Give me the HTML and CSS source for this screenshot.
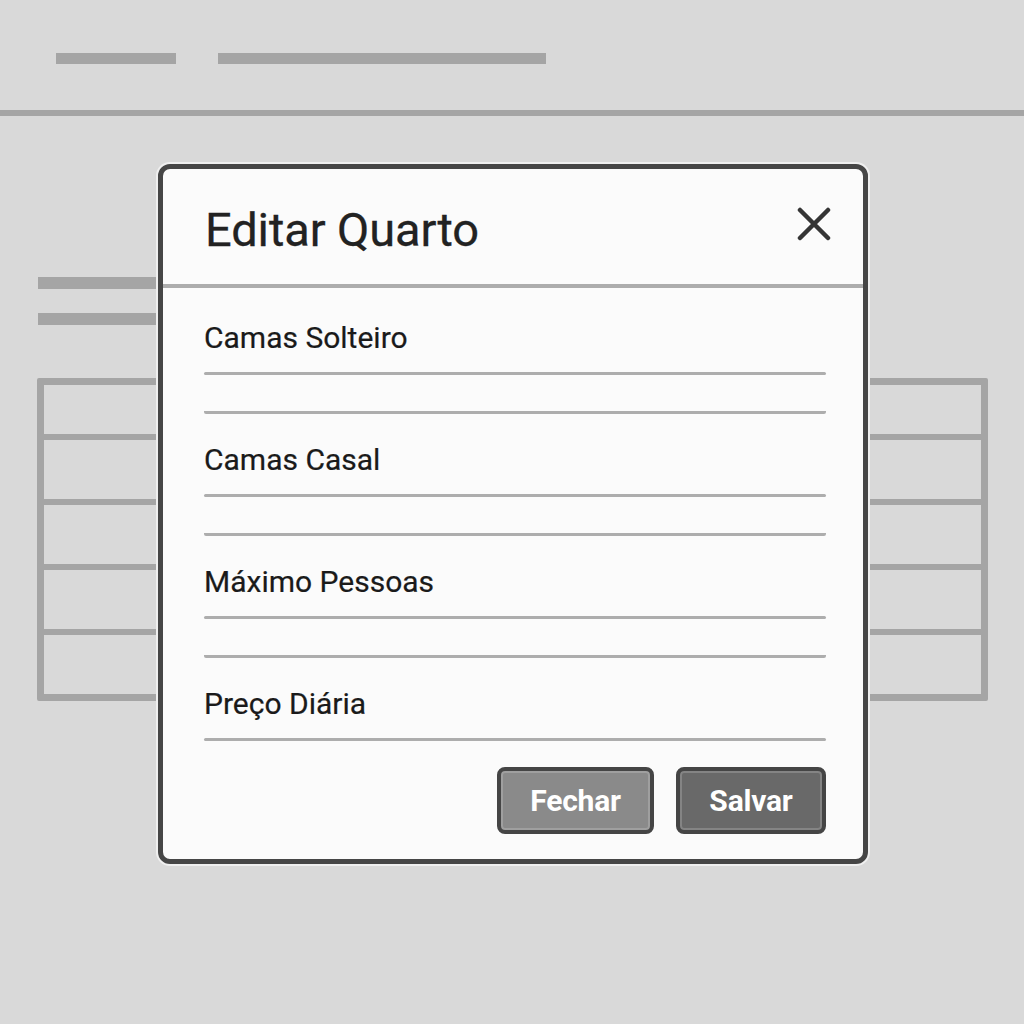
FILE: index.html
```html
<!DOCTYPE html>
<html lang="pt">
<head>
<meta charset="utf-8">
<title>Editar Quarto</title>
<link rel="stylesheet" href="styles.css">
</head>
<body>
<div class="page">
  <div class="topbar">
    <span class="bar bar-short"></span>
    <span class="bar bar-long"></span>
  </div>
  <div class="rule"></div>
  <div class="content">
    <div class="stub stub-first"></div>
    <div class="stub stub-second"></div>
    <div class="table">
      <div class="row row-first"></div>
      <div class="row"></div>
      <div class="row"></div>
      <div class="row"></div>
      <div class="row row-last"></div>
    </div>
  </div>

  <div class="modal">
    <div class="modal-header">
      <h1 class="modal-title">Editar Quarto</h1>
      <button class="close" aria-label="Fechar">
        <svg width="34" height="34" viewBox="0 0 34 34"><path d="M3 3 L31 31 M31 3 L3 31" stroke="#353535" stroke-width="4.5" stroke-linecap="round" fill="none"/></svg>
      </button>
    </div>
    <div class="modal-divider"></div>
    <div class="modal-body">
      <div class="field">
        <div class="label">Camas Solteiro</div>
        <div class="line"></div>
        <div class="input"></div>
      </div>
      <div class="field">
        <div class="label">Camas Casal</div>
        <div class="line"></div>
        <div class="input"></div>
      </div>
      <div class="field">
        <div class="label">Máximo Pessoas</div>
        <div class="line"></div>
        <div class="input"></div>
      </div>
      <div class="field field-last">
        <div class="label">Preço Diária</div>
        <div class="line"></div>
      </div>
      <div class="actions">
        <button class="btn btn-close">Fechar</button>
        <button class="btn btn-save">Salvar</button>
      </div>
    </div>
  </div>
</div>
</body>
</html>
```
FILE: styles.css
```css
* { box-sizing: border-box; }
html, body { margin: 0; padding: 0; }
body {
  background: #d9d9d9;
  font-family: Roboto, "Liberation Sans", sans-serif;
}
.page {
  position: relative;
  width: 1024px;
  height: 1024px;
  overflow: hidden;
}
.topbar {
  display: flex;
  gap: 42px;
  padding: 53px 0 0 56px;
}
.bar {
  display: block;
  height: 11px;
  background: #a5a5a5;
}
.bar-short { width: 120px; }
.bar-long { width: 328px; }
.rule {
  margin-top: 46px;
  height: 6px;
  background: #a5a5a5;
}
.content {
  padding: 0 36px 0 37px;
}
.stub {
  height: 12px;
  width: 170px;
  background: #a5a5a5;
  margin-left: 1px;
}
.stub-first { margin-top: 161px; }
.stub-second { margin-top: 24px; }
.table {
  margin-top: 53px;
  border: 7px solid #a5a5a5;
  border-radius: 2px;
}
.row {
  height: 65px;
  border-bottom: 6px solid #a5a5a5;
}
.row-first { height: 55px; }
.row-last { height: 59px; border-bottom: 0; }

.modal {
  position: absolute;
  left: 158px;
  top: 164px;
  width: 710px;
  background: #fbfbfb;
  border: 5px solid #464646;
  border-radius: 12px;
  box-shadow: 0 0 0 2px #efefef;
}
.modal-header {
  display: flex;
  justify-content: space-between;
  align-items: flex-start;
  height: 115px;
  padding: 33px 32px 0 42px;
}
.modal-title {
  margin: 0;
  font-size: 47px;
  line-height: 56px;
  font-weight: 400;
  color: #222222;
  letter-spacing: -0.1px;
  -webkit-text-stroke: 0.3px #222222;
}
.close {
  margin-top: 5px;
  padding: 0;
  border: 0;
  background: none;
  width: 34px;
  height: 34px;
}
.close svg { display: block; }
.modal-divider {
  height: 4px;
  background: #adadad;
}
.modal-body {
  padding: 32px 37px 25px 41px;
}
.field { margin-bottom: 28px; }
.field-last { margin-bottom: 26px; }
.label {
  font-size: 30px;
  line-height: 36px;
  color: #1a1a1a;
  margin-bottom: 16px;
  -webkit-text-stroke: 0.2px #1a1a1a;
}
.line {
  height: 3px;
  border-radius: 2px;
  background: #adadad;
}
.input {
  height: 39px;
  border-bottom: 3px solid #adadad;
  border-radius: 0 0 2px 2px;
}
.actions {
  display: flex;
  justify-content: flex-end;
  gap: 22px;
}
.btn {
  height: 67px;
  border: 4px solid #454545;
  border-radius: 8px;
  color: #ffffff;
  font-family: Roboto, "Liberation Sans", sans-serif;
  font-size: 30px;
  font-weight: 700;
  letter-spacing: -0.2px;
  box-shadow: inset 0 0 0 2px rgba(255,255,255,0.18);
}
.btn-close { width: 157px; background: #8a8a8a; }
.btn-save { width: 150px; background: #696969; }
```
